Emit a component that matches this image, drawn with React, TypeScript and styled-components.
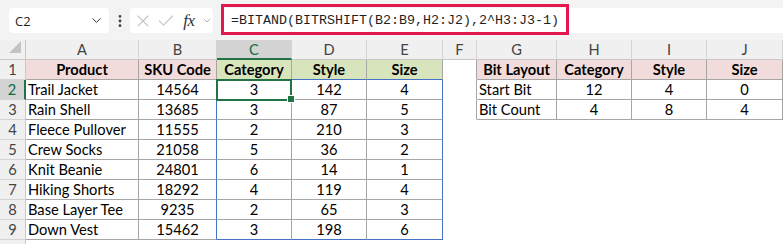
import React from "react";
import styled, { createGlobalStyle } from "styled-components";
import { ChevronDown, EllipsisVertical, X, Check } from "lucide-react";

const GlobalStyle = createGlobalStyle`
  html, body {
    margin: 0;
    padding: 0;
    background: #fff;
    overflow: hidden;
  }
  * {
    box-sizing: border-box;
  }
`;

const GRAY = "#a6a6a6";
const BLUE = "#4472c4";
const PINK = "#f2dcdb";
const GREEN = "#d8e4bc";
const EXCEL_GREEN = "#217346";

const Page = styled.div`
  width: 783px;
  height: 244px;
  overflow: hidden;
  font-family: Lato, "Liberation Sans", sans-serif;
`;

// formula bar strip
const TopBar = styled.div`
  display: flex;
  align-items: flex-start;
  height: 40px;
  padding: 8px 0 0 9px;
  background: #f3f3f3;
`;

const NameBox = styled.div`
  display: flex;
  align-items: center;
  justify-content: space-between;
  width: 100px;
  height: 25px;
  padding: 0 5px 0 6px;
  background: #fff;
  border-radius: 4px;
  font-family: "Open Sans", "Liberation Sans", sans-serif;
  font-size: 13px;
  color: #1f1f1f;
`;

const Dots = styled.div`
  display: flex;
  align-items: center;
  justify-content: center;
  width: 21px;
  height: 25px;
  color: #404040;
`;

const FxBox = styled.div`
  display: flex;
  align-items: center;
  width: 83px;
  height: 25px;
  background: #fff;
  border-radius: 4px;
`;

const Slot = styled.div<{ $w: number; $color?: string }>`
  display: flex;
  align-items: center;
  justify-content: center;
  width: ${(p) => p.$w}px;
  height: 100%;
  color: ${(p) => p.$color ?? "#c4c4c4"};
`;

const Fx = styled.span`
  font-family: "Liberation Serif", serif;
  font-style: italic;
  font-size: 17px;
  color: #333;
  letter-spacing: -0.5px;
`;

const FormulaBar = styled.div`
  position: relative;
  flex: 1;
  display: flex;
  align-items: center;
  height: 25px;
  margin-left: 8px;
  padding-left: 10px;
  background: #fff;
  font-family: "Liberation Mono", monospace;
  font-size: 13.33px;
  color: #1f1f1f;
  white-space: nowrap;
`;

const RedFrame = styled.div`
  position: absolute;
  left: 0;
  top: -4px;
  width: 348px;
  height: 31px;
  border: 3px solid #e3184c;
  pointer-events: none;
`;

// grid
const Sheet = styled.div`
  display: grid;
  grid-template-columns: 26px 113px 78px 75px 75px 76px 34px 80px 75px 75px 76px;
  grid-auto-rows: 20px;
  font-size: 14.67px;
  line-height: 20px;
`;

const Corner = styled.div`
  display: flex;
  align-items: flex-end;
  justify-content: flex-end;
  padding: 0 4px 6px 0;
  background: #f0f0f0;
  border-right: 1px solid #c8c8c8;
  border-bottom: 1px solid #c8c8c8;
`;

const CornerTri = styled.div`
  width: 12px;
  height: 12px;
  background: #c3c3c3;
  clip-path: polygon(100% 0, 100% 100%, 0 100%);
`;

const ColHead = styled.div<{ $selected?: boolean }>`
  text-align: center;
  background: ${(p) => (p.$selected ? "#d3d3d3" : "#f0f0f0")};
  color: ${(p) => (p.$selected ? "#0f6a3a" : "#444")};
  border-right: 1px solid #d4d4d4;
  border-bottom: ${(p) => (p.$selected ? `2px solid ${EXCEL_GREEN}` : "1px solid #c8c8c8")};
`;

const RowHead = styled.div<{ $selected?: boolean }>`
  text-align: center;
  background: ${(p) => (p.$selected ? "#d3d3d3" : "#f0f0f0")};
  color: ${(p) => (p.$selected ? "#0f6a3a" : "#444")};
  border-bottom: 1px solid #d4d4d4;
  border-right: ${(p) => (p.$selected ? `2px solid ${EXCEL_GREEN}` : "1px solid #c8c8c8")};
`;

type Align = "left" | "center";

const Cell = styled.div<{
  $align?: Align;
  $bold?: boolean;
  $fill?: string;
  $right?: string;
  $bottom?: string;
  $selected?: boolean;
}>`
  position: ${(p) => (p.$selected ? "relative" : "static")};
  padding: 0 2px;
  text-align: ${(p) => p.$align ?? "left"};
  font-weight: ${(p) => (p.$bold ? 700 : 400)};
  background: ${(p) => p.$fill ?? "#fff"};
  color: #000;
  border-right: 1px solid ${(p) => p.$right ?? "transparent"};
  border-bottom: 1px solid ${(p) => p.$bottom ?? "transparent"};
  white-space: nowrap;
  overflow: ${(p) => (p.$selected ? "visible" : "hidden")};
`;

const SelectionBox = styled.div`
  position: absolute;
  inset: -1px -1px -2px -1px;
  border: 2px solid ${EXCEL_GREEN};
  pointer-events: none;
  z-index: 2;
`;

const FillHandle = styled.div`
  position: absolute;
  right: -5px;
  bottom: -4px;
  width: 8px;
  height: 8px;
  background: ${EXCEL_GREEN};
  border: 1px solid #fff;
`;

const COLS = ["A", "B", "C", "D", "E", "F", "G", "H", "I", "J"];

const products: (string | number)[][] = [
  ["Trail Jacket", 14564, 3, 142, 4],
  ["Rain Shell", 13685, 3, 87, 5],
  ["Fleece Pullover", 11555, 2, 210, 3],
  ["Crew Socks", 21058, 5, 36, 2],
  ["Knit Beanie", 24801, 6, 14, 1],
  ["Hiking Shorts", 18292, 4, 119, 4],
  ["Base Layer Tee", 9235, 2, 65, 3],
  ["Down Vest", 15462, 3, 198, 6],
];

const bitLayout = [
  ["Bit Layout", "Category", "Style", "Size"],
  ["Start Bit", "12", "4", "0"],
  ["Bit Count", "4", "8", "4"],
];

interface CellSpec {
  text?: string;
  align?: Align;
  bold?: boolean;
  fill?: string;
  right?: string;
  bottom?: string;
  selected?: boolean;
}

function specFor(r: number, c: number): CellSpec {
  if (c <= 4 && r <= 9) {
    const header = r === 1;
    const row = header ? ["Product", "SKU Code", "Category", "Style", "Size"] : products[r - 2];
    const spec: CellSpec = {
      text: String(row[c]),
      align: c === 0 && !header ? "left" : "center",
      bold: header,
      fill: header ? (c >= 2 ? GREEN : PINK) : undefined,
      right: GRAY,
      bottom: GRAY,
    };
    // spill range outline C2:E9
    if (!header && (c === 1 || c === 4)) spec.right = BLUE;
    if ((r === 1 || r === 9) && c >= 2) spec.bottom = BLUE;
    if (r === 2 && c === 2) spec.selected = true;
    return spec;
  }
  if (c === 5) return { right: r <= 3 ? GRAY : undefined };
  if (c >= 6 && r <= 3) {
    const header = r === 1;
    return {
      text: bitLayout[r - 1][c - 6],
      align: c === 6 && !header ? "left" : "center",
      bold: header,
      fill: header ? PINK : undefined,
      right: GRAY,
      bottom: GRAY,
    };
  }
  return {};
}

const ROWS = [1, 2, 3, 4, 5, 6, 7, 8, 9, 10];

export default function App() {
  return (
    <Page>
      <GlobalStyle />
      <TopBar>
        <NameBox>
          <span>C2</span>
          <ChevronDown size={15} strokeWidth={1.6} color="#333" />
        </NameBox>
        <Dots>
          <EllipsisVertical size={16} strokeWidth={2.2} />
        </Dots>
        <FxBox>
          <Slot $w={25}>
            <X size={20} strokeWidth={1.3} />
          </Slot>
          <Slot $w={22}>
            <Check size={20} strokeWidth={1.3} />
          </Slot>
          <Slot $w={24} $color="#333">
            <Fx>fx</Fx>
          </Slot>
          <Slot $w={12} $color="#9a9a9a">
            <ChevronDown size={15} strokeWidth={1.5} />
          </Slot>
        </FxBox>
        <FormulaBar>
          =BITAND(BITRSHIFT(B2:B9,H2:J2),2^H3:J3-1)
          <RedFrame />
        </FormulaBar>
      </TopBar>
      <Sheet>
        <Corner>
          <CornerTri />
        </Corner>
        {COLS.map((col) => (
          <ColHead key={col} $selected={col === "C"}>
            {col}
          </ColHead>
        ))}
        {ROWS.map((r) => (
          <React.Fragment key={r}>
            {/* row 10 is only a sliver at the bottom edge, its number isn't visible */}
            <RowHead $selected={r === 2}>{r < 10 ? r : null}</RowHead>
            {COLS.map((col, c) => {
              const s = specFor(r, c);
              return (
                <Cell
                  key={col + r}
                  $align={s.align}
                  $bold={s.bold}
                  $fill={s.fill}
                  $right={s.right}
                  $bottom={s.bottom}
                  $selected={s.selected}
                >
                  {s.text}
                  {s.selected && (
                    <SelectionBox>
                      <FillHandle />
                    </SelectionBox>
                  )}
                </Cell>
              );
            })}
          </React.Fragment>
        ))}
      </Sheet>
    </Page>
  );
}
